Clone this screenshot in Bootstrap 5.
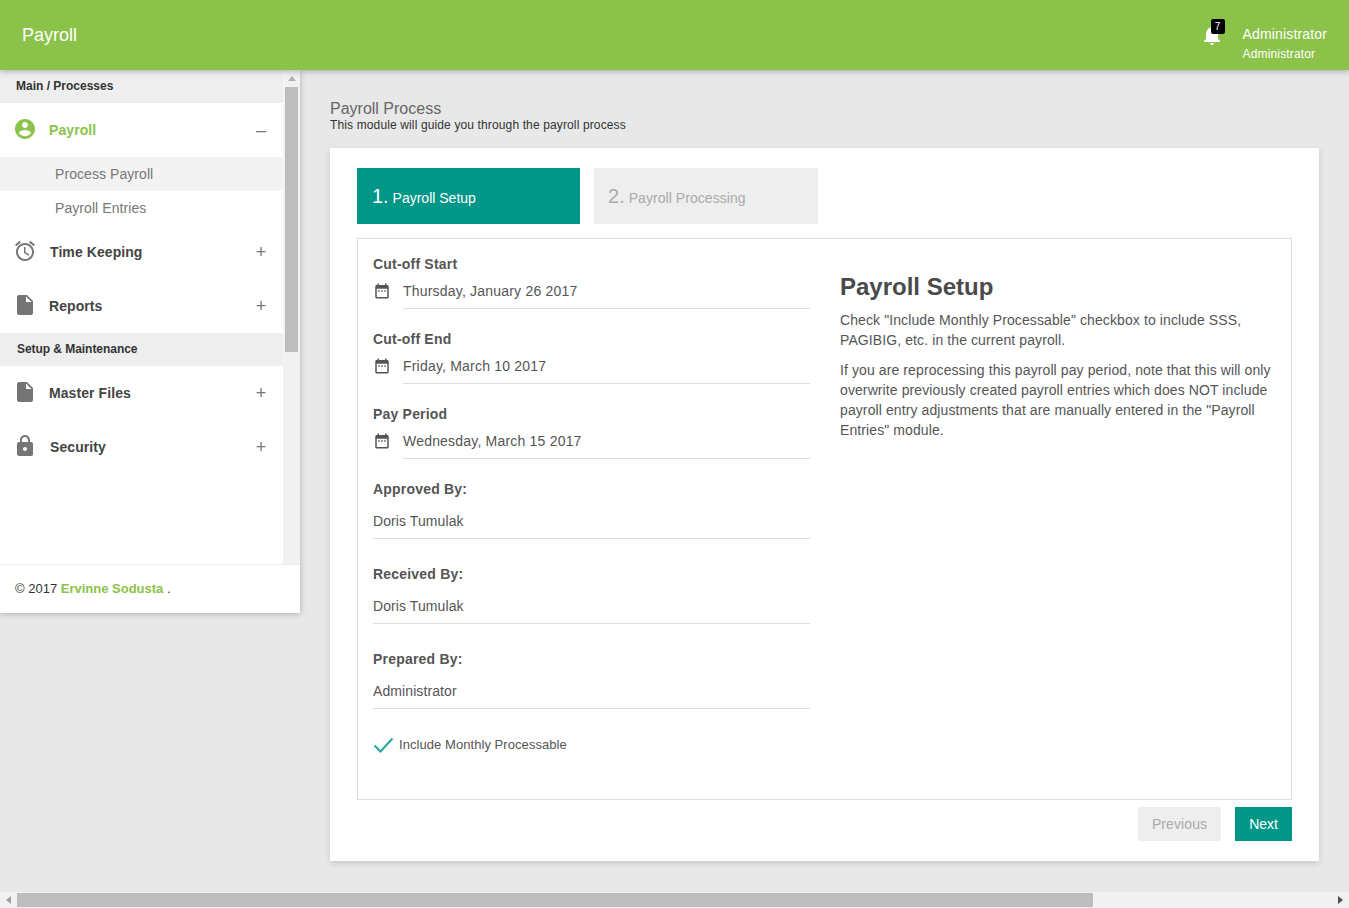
<!DOCTYPE html>
<html lang="en">
<head>
<meta charset="utf-8">
<title>Payroll</title>
<link href="https://cdn.jsdelivr.net/npm/bootstrap@5.3.0/dist/css/bootstrap.min.css" rel="stylesheet">
<style>
html,body{height:100%;overflow:hidden}
body{background:#e8e8e8;font-family:"Liberation Sans",Arial,sans-serif;font-size:14px;color:#555}
.app-shell{height:908px}
.top-bar{height:70px;background:#8bc34a;padding:0 22px;box-shadow:0 1px 6px rgba(0,0,0,.3);z-index:5;position:relative;flex:none}
.top-brand{color:#fff;font-size:18px;padding:0;margin:0;line-height:20px}
.top-brand:hover{color:#fff}
.bell-wrap{position:relative;width:24px;height:24px;margin-right:19px}
.bell-wrap svg{display:block;fill:#fff}
.bell-num{position:absolute;left:11px;top:-4px;width:14px;height:15px;background:#000;color:#fff;border-radius:2px;font-size:10px;line-height:15px;text-align:center}
.user-box{padding-top:16px}
.user-a{color:#fff;font-size:14px;line-height:20px;padding-top:1px;letter-spacing:.15px}
.user-b{color:#fff;font-size:12px;line-height:20px;letter-spacing:.15px}
.mid-area{flex:1 1 auto;min-height:0}
.side-panel{width:300px;flex:none;height:543px;background:#fff;box-shadow:0 1px 6px rgba(0,0,0,.25)}
.side-scroll{height:494px}
.side-menu{width:283px;flex:none}
.side-head{height:33px;background:#eee;color:#333;font-size:12px;font-weight:700;line-height:32px;padding-left:16px}
.side-head.setup-head{padding-left:17px;letter-spacing:-.05px}
.side-link{height:54px;padding:0 15px 0 13px;color:#444;font-weight:700;letter-spacing:.08px;text-decoration:none}
.side-link svg{fill:#757575;flex:none;margin-bottom:2px}
.side-link .lbl{margin-left:12px}
.side-link .lbl.lbl-wide{margin-left:13px}
.side-link.open,.side-link.open .lbl{color:#8bc34a}
.side-link.open svg{fill:#8bc34a}
.pm{width:14px;text-align:center;font-weight:400;font-size:18px;color:#777;letter-spacing:0;line-height:20px}
.sub-link{height:34px;line-height:34px;padding-left:55px;color:#777;text-decoration:none;display:block;letter-spacing:.07px}
.sub-link.on{background:#f3f3f3}
.v-track{width:17px;background:#f1f1f1;flex:none;margin-right:0;border-left:1px solid #f4f4f4}
.v-btn{height:17px;display:flex;align-items:center;justify-content:center}
.v-thumb{height:265px;width:13px;margin-left:1px;background:#bdbdbd}
.tri-up{width:0;height:0;border:4px solid transparent;border-top:0;border-bottom:5px solid #b0b0b0}
.side-foot{height:49px;border-top:1px solid #eee;padding:14px 15px 0;color:#333;line-height:20px;font-size:13px}
.side-foot a{color:#8bc34a;font-weight:700;text-decoration:none}
.main-pane{padding:30px 30px 0;min-width:0}
.page-title{font-size:16px;line-height:18px;color:#666;font-weight:400;margin:0}
.page-sub{font-size:12px;line-height:14px;color:#333;margin:0 0 16px;letter-spacing:.13px}
.sheet{height:713px;border:0;border-radius:0;background:#fff;padding:20px 27px;box-shadow:0 2px 6px rgba(0,0,0,.15)}
.step-a,.step-b{height:56px;width:223px;display:flex;align-items:center;padding:0 15px;font-size:14px}
.step-a{background:#009688;color:#fff}
.step-b{background:#eee;color:#aaa;margin-left:14px;width:224px;padding-left:14px;letter-spacing:.05px}
.step-a b,.step-b b{font-weight:400;font-size:20px}
.step-box{height:562px;margin-top:14px;border:1px solid #ddd;padding:0 15px}
.left-col{width:437px;flex:none}
.right-col{margin-left:30px;padding-top:34px;flex:1 1 auto;padding-right:2px}
.f-label{font-weight:700;color:#555;line-height:20px;letter-spacing:.2px}
.f-date{margin-top:0}
.f-date svg{fill:#555;margin-right:12px;margin-bottom:2px;flex:none}
.f-val{flex:1 1 auto;border-bottom:1px solid #ddd;line-height:20px;padding:7px 0 7px;letter-spacing:.2px;color:#555}
.first-label{margin-top:15px}
.dgroup{margin-bottom:20px}
.pgroup{margin-bottom:25px}
.pval{border-bottom:1px solid #ddd;line-height:20px;padding:12px 0 7px;color:#555;letter-spacing:.09px}
.check-row{margin-top:26px;font-size:13px;letter-spacing:.06px;color:#555}
.check-row svg{margin-right:5px;flex:none}
.setup-title{font-size:24px;font-weight:700;color:#4a4a4a;line-height:28px;margin:0 0 9px}
.setup-text{line-height:20px;margin:0 0 10px;color:#555;letter-spacing:.1px}
.foot-btns{margin-top:7px}
.btn-prev,.btn-next{border:0;border-radius:0;height:34px;padding:0 14px;font-size:14px;line-height:34px}
.btn-prev{background:#eee;color:#aaa;margin-right:14px;letter-spacing:.1px}
.btn-next{background:#009688;color:#fff}
.btn-next:hover{background:#009688;color:#fff}
.h-track{height:16px;background:#f1f1f1;flex:none;position:relative;z-index:6}
.h-btn{width:17px;flex:none;display:flex;align-items:center;justify-content:center}
.h-thumb{width:1076px;margin:1px 0;background:#bdbdbd}
.tri-l{width:0;height:0;border:4px solid transparent;border-left:0;border-right:5px solid #a0a0a0}
.tri-r{width:0;height:0;border:4px solid transparent;border-right:0;border-left:5px solid #505050}
</style>
</head>
<body>
<div class="app-shell d-flex flex-column">
  <nav class="navbar top-bar d-flex justify-content-between align-items-center flex-nowrap">
    <a class="navbar-brand top-brand" href="#">Payroll</a>
    <div class="d-flex align-items-center">
      <div class="bell-wrap">
        <svg width="24" height="24" viewBox="0 0 24 24"><path d="M12 22c1.1 0 2-.9 2-2h-4c0 1.1.89 2 2 2zm6-6v-5c0-3.07-1.64-5.64-4.5-6.32V4c0-.83-.67-1.5-1.5-1.5s-1.5.67-1.5 1.5v.68C7.63 5.36 6 7.92 6 11v5l-2 2v1h16v-1l-2-2z"/></svg>
        <span class="bell-num">7</span>
      </div>
      <div class="user-box">
        <div class="user-a">Administrator</div>
        <div class="user-b">Administrator</div>
      </div>
    </div>
  </nav>
  <div class="mid-area d-flex">
    <aside class="side-panel">
      <div class="side-scroll d-flex">
        <div class="side-menu">
          <div class="side-head">Main / Processes</div>
          <a href="#" class="side-link open d-flex align-items-center">
            <svg width="24" height="24" viewBox="0 0 24 24"><path d="M12 2C6.48 2 2 6.48 2 12s4.48 10 10 10 10-4.48 10-10S17.52 2 12 2zm0 3c1.66 0 3 1.34 3 3s-1.34 3-3 3-3-1.34-3-3 1.34-3 3-3zm0 14.2c-2.5 0-4.71-1.28-6-3.22.03-1.99 4-3.08 6-3.08 1.99 0 5.97 1.09 6 3.08-1.29 1.94-3.5 3.22-6 3.22z"/></svg>
            <span class="lbl flex-grow-1">Payroll</span><span class="pm">&ndash;</span>
          </a>
          <a href="#" class="sub-link on">Process Payroll</a>
          <a href="#" class="sub-link">Payroll Entries</a>
          <a href="#" class="side-link d-flex align-items-center">
            <svg width="24" height="24" viewBox="0 0 24 24"><path d="M22 5.72l-4.6-3.86-1.29 1.53 4.6 3.86L22 5.72zM7.88 3.39L6.6 1.86 2 5.71l1.29 1.53 4.59-3.85zM12.5 8H11v6l4.75 2.85.75-1.23-4-2.37V8zM12 4c-4.97 0-9 4.03-9 9s4.02 9 9 9c4.97 0 9-4.03 9-9s-4.03-9-9-9zm0 16c-3.87 0-7-3.13-7-7s3.13-7 7-7 7 3.13 7 7-3.13 7-7 7z"/></svg>
            <span class="lbl lbl-wide flex-grow-1">Time Keeping</span><span class="pm">+</span>
          </a>
          <a href="#" class="side-link d-flex align-items-center">
            <svg width="24" height="24" viewBox="0 0 24 24"><path d="M6 2c-1.1 0-1.99.9-1.99 2L4 20c0 1.1.89 2 1.99 2H18c1.1 0 2-.9 2-2V8l-6-6H6zm7 7V3.5L18.5 9H13z"/></svg>
            <span class="lbl flex-grow-1">Reports</span><span class="pm">+</span>
          </a>
          <div class="side-head setup-head">Setup &amp; Maintenance</div>
          <a href="#" class="side-link d-flex align-items-center">
            <svg width="24" height="24" viewBox="0 0 24 24"><path d="M6 2c-1.1 0-1.99.9-1.99 2L4 20c0 1.1.89 2 1.99 2H18c1.1 0 2-.9 2-2V8l-6-6H6zm7 7V3.5L18.5 9H13z"/></svg>
            <span class="lbl flex-grow-1">Master Files</span><span class="pm">+</span>
          </a>
          <a href="#" class="side-link d-flex align-items-center">
            <svg width="24" height="24" viewBox="0 0 24 24"><path d="M18 8h-1V6c0-2.76-2.24-5-5-5S7 3.24 7 6v2H6c-1.1 0-2 .9-2 2v10c0 1.1.9 2 2 2h12c1.1 0 2-.9 2-2V10c0-1.1-.9-2-2-2zm-6 9c-1.1 0-2-.9-2-2s.9-2 2-2 2 .9 2 2-.9 2-2 2zm3.1-9H8.9V6c0-1.71 1.39-3.1 3.1-3.1 1.71 0 3.1 1.39 3.1 3.1v2z"/></svg>
            <span class="lbl lbl-wide flex-grow-1">Security</span><span class="pm">+</span>
          </a>
        </div>
        <div class="v-track">
          <div class="v-btn"><span class="tri-up"></span></div>
          <div class="v-thumb"></div>
        </div>
      </div>
      <div class="side-foot">© 2017 <a href="#">Ervinne Sodusta</a> <span>.</span></div>
    </aside>
    <main class="main-pane flex-grow-1">
      <h1 class="page-title">Payroll Process</h1>
      <p class="page-sub">This module will guide you through the payroll process</p>
      <div class="card sheet">
        <div class="d-flex">
          <div class="step-a"><span><b>1.</b> Payroll Setup</span></div>
          <div class="step-b"><span><b>2.</b> Payroll Processing</span></div>
        </div>
        <div class="step-box d-flex">
          <div class="left-col">
            <div class="dgroup first-label">
              <div class="f-label">Cut-off Start</div>
              <div class="f-date d-flex align-items-center">
                <svg width="18" height="18" viewBox="0 0 24 24"><path d="M9 11H7v2h2v-2zm4 0h-2v2h2v-2zm4 0h-2v2h2v-2zm2-7h-1V2h-2v2H8V2H6v2H5c-1.11 0-1.99.9-1.99 2L3 20c0 1.1.89 2 2 2h14c1.1 0 2-.9 2-2V6c0-1.1-.9-2-2-2zm0 16H5V9h14v11z"/></svg>
                <div class="f-val">Thursday, January 26 2017</div>
              </div>
            </div>
            <div class="dgroup">
              <div class="f-label">Cut-off End</div>
              <div class="f-date d-flex align-items-center">
                <svg width="18" height="18" viewBox="0 0 24 24"><path d="M9 11H7v2h2v-2zm4 0h-2v2h2v-2zm4 0h-2v2h2v-2zm2-7h-1V2h-2v2H8V2H6v2H5c-1.11 0-1.99.9-1.99 2L3 20c0 1.1.89 2 2 2h14c1.1 0 2-.9 2-2V6c0-1.1-.9-2-2-2zm0 16H5V9h14v11z"/></svg>
                <div class="f-val">Friday, March 10 2017</div>
              </div>
            </div>
            <div class="dgroup">
              <div class="f-label">Pay Period</div>
              <div class="f-date d-flex align-items-center">
                <svg width="18" height="18" viewBox="0 0 24 24"><path d="M9 11H7v2h2v-2zm4 0h-2v2h2v-2zm4 0h-2v2h2v-2zm2-7h-1V2h-2v2H8V2H6v2H5c-1.11 0-1.99.9-1.99 2L3 20c0 1.1.89 2 2 2h14c1.1 0 2-.9 2-2V6c0-1.1-.9-2-2-2zm0 16H5V9h14v11z"/></svg>
                <div class="f-val">Wednesday, March 15 2017</div>
              </div>
            </div>
            <div class="pgroup">
              <div class="f-label">Approved By:</div>
              <div class="pval">Doris Tumulak</div>
            </div>
            <div class="pgroup">
              <div class="f-label">Received By:</div>
              <div class="pval">Doris Tumulak</div>
            </div>
            <div class="pgroup">
              <div class="f-label">Prepared By:</div>
              <div class="pval">Administrator</div>
            </div>
            <div class="check-row d-flex align-items-center">
              <svg width="21" height="16" viewBox="0 0 21 16"><path d="M1.5 8.5l6 6L19.5 1.5" fill="none" stroke="#26a69a" stroke-width="2"/></svg>
              <span>Include Monthly Processable</span>
            </div>
          </div>
          <div class="right-col">
            <h2 class="setup-title">Payroll Setup</h2>
            <p class="setup-text">Check "Include Monthly Processable" checkbox to include SSS, PAGIBIG, etc. in the current payroll.</p>
            <p class="setup-text">If you are reprocessing this payroll pay period, note that this will only overwrite previously created payroll entries which does NOT include payroll entry adjustments that are manually entered in the "Payroll Entries" module.</p>
          </div>
        </div>
        <div class="foot-btns d-flex justify-content-end">
          <button type="button" class="btn btn-prev">Previous</button>
          <button type="button" class="btn btn-next">Next</button>
        </div>
      </div>
    </main>
  </div>
  <div class="h-track d-flex">
    <div class="h-btn"><span class="tri-l"></span></div>
    <div class="h-thumb"></div>
    <div class="flex-grow-1"></div>
    <div class="h-btn"><span class="tri-r"></span></div>
  </div>
</div>
<script src="https://cdn.jsdelivr.net/npm/bootstrap@5.3.0/dist/js/bootstrap.bundle.min.js"></script>
</body>
</html>
